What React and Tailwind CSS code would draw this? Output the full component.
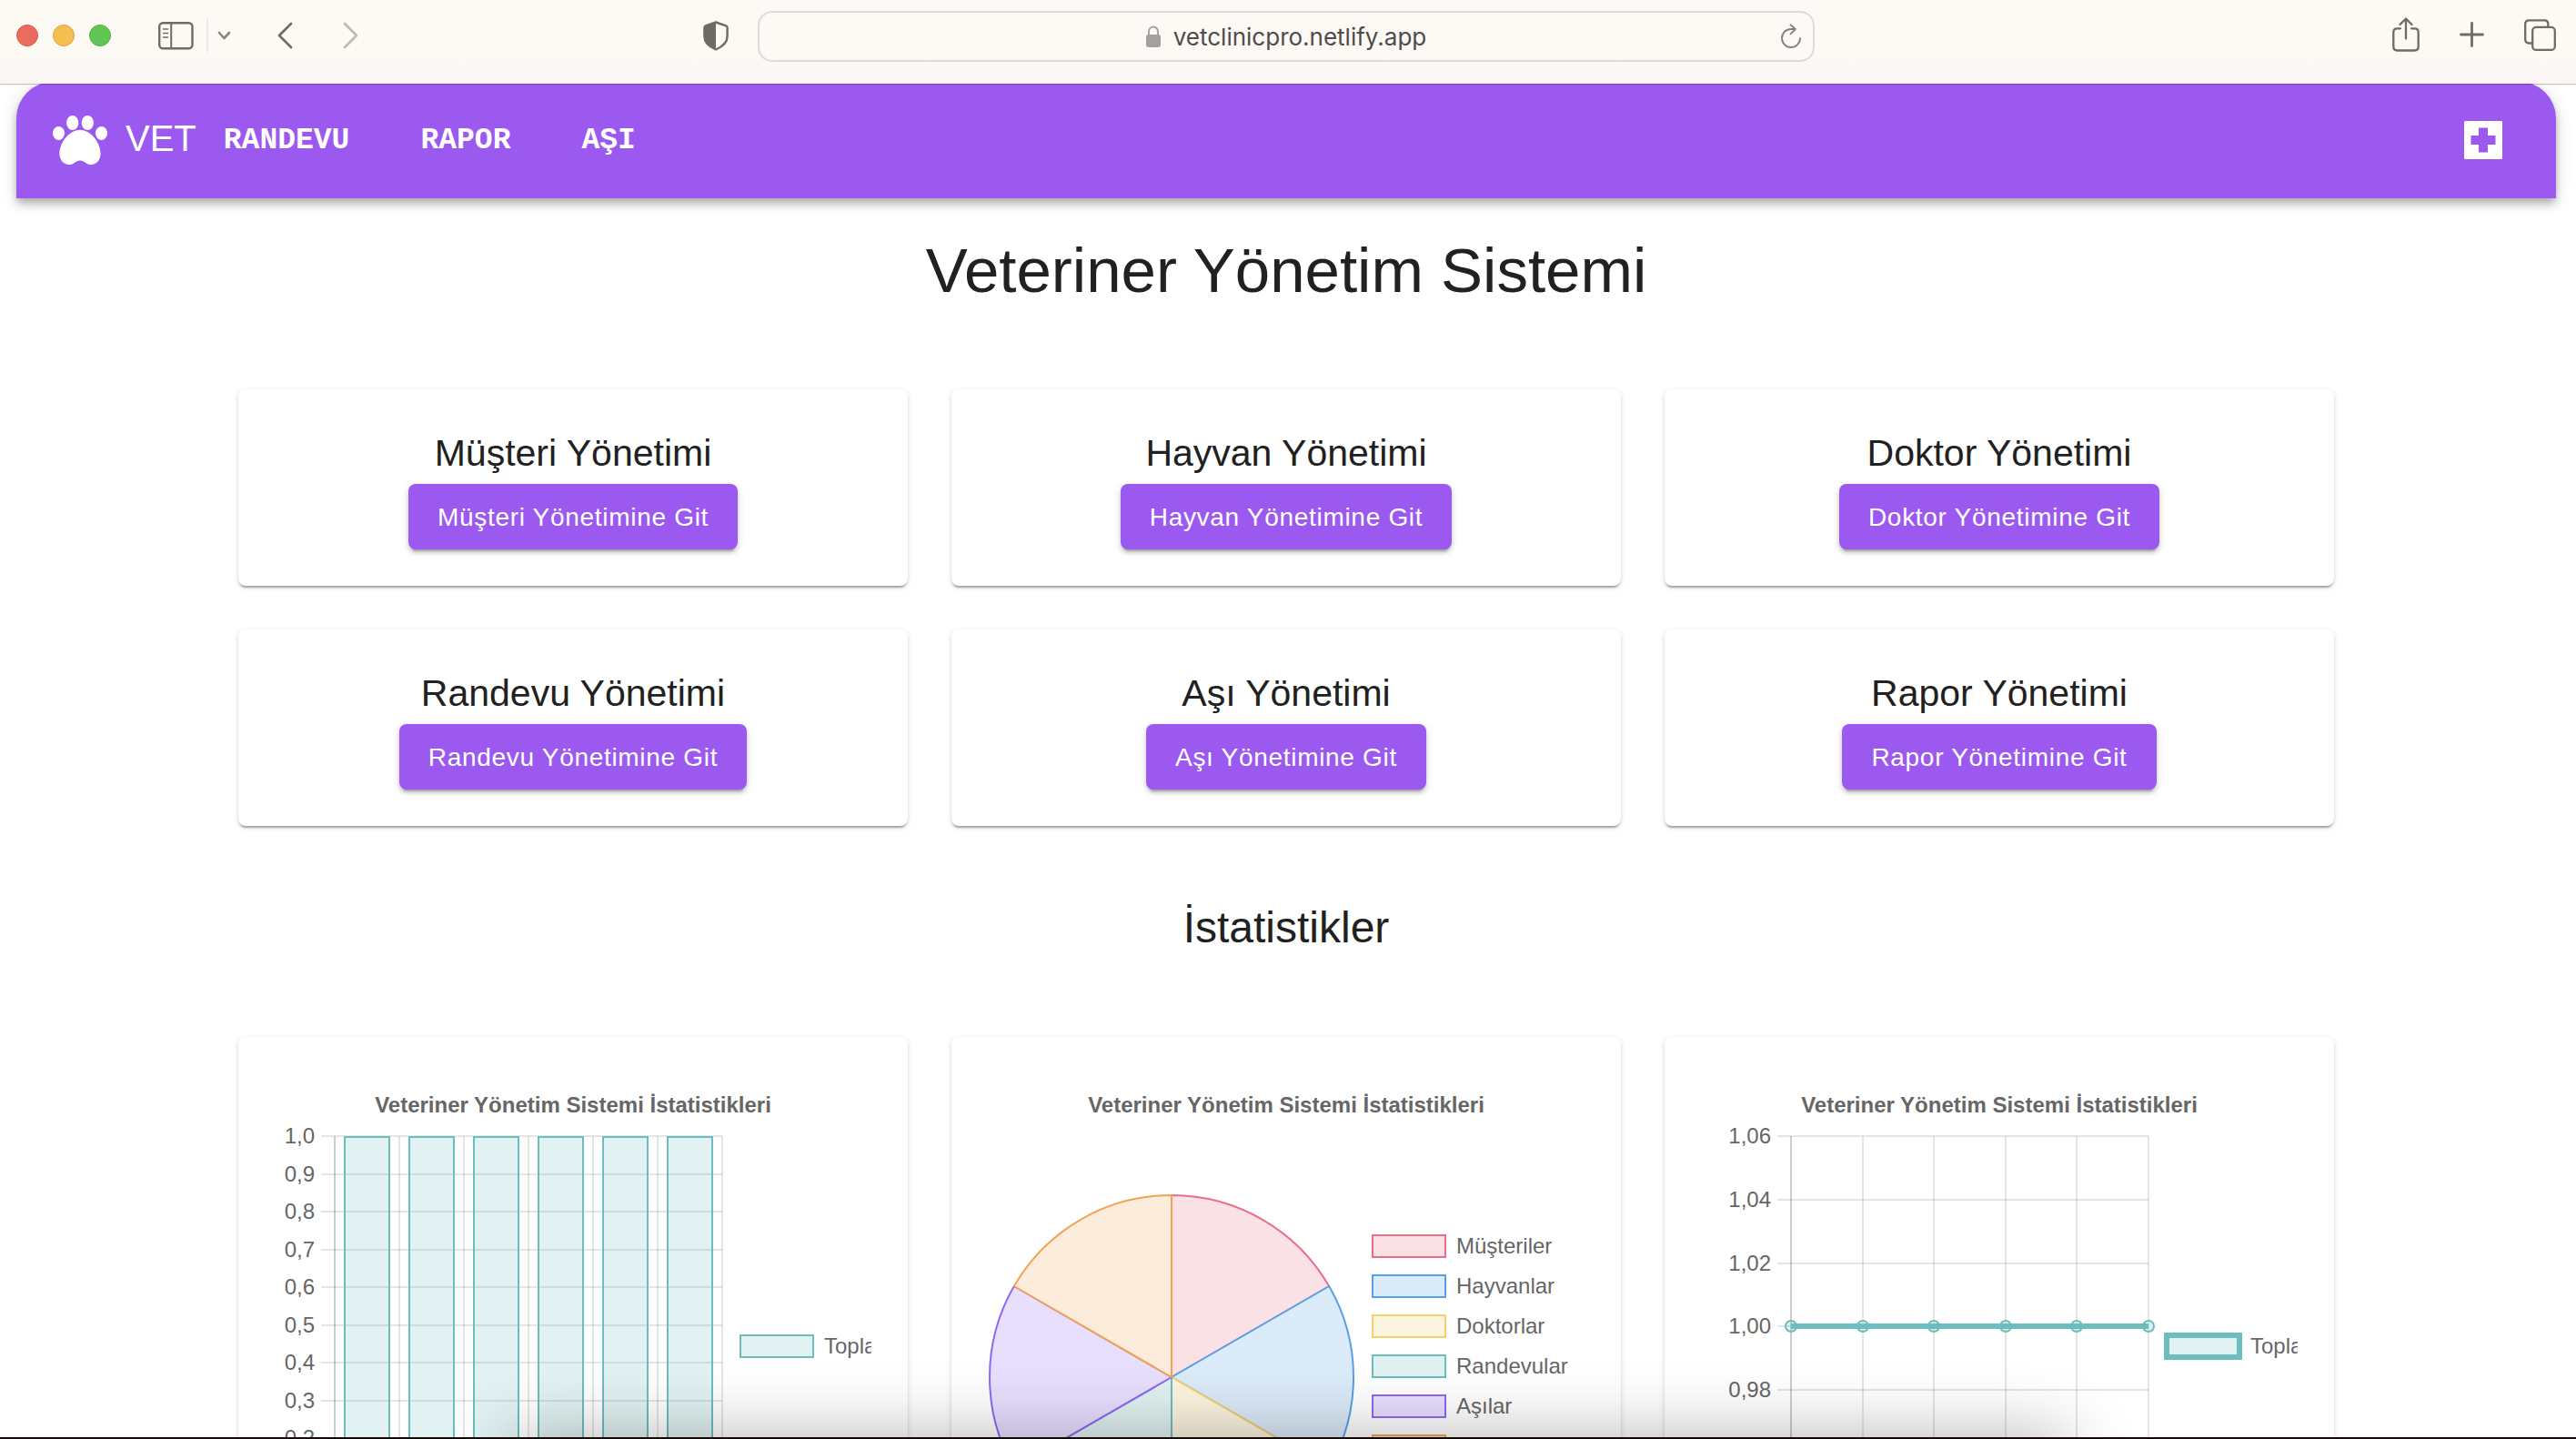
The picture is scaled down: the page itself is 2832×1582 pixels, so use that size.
const SANS = "font-['Liberation_Sans',Arial,sans-serif]";
const PAPER =
  "rounded-lg bg-white shadow-[0_4px_2px_-2px_rgba(0,0,0,0.2),0_2px_2px_rgba(0,0,0,0.14),0_2px_6px_rgba(0,0,0,0.12)]";
const INK = "#6f6b66";
const TEAL = "#6cbdbd";
const TEAL_FILL = "rgba(108,189,189,0.2)";

const modules = ["Müşteri", "Hayvan", "Doktor", "Randevu", "Aşı", "Rapor"];

const slices = [
  { label: "Müşteriler", stroke: "#eb6d87", fill: "#fae1e6" },
  { label: "Hayvanlar", stroke: "#57a0e5", fill: "#dcebf9" },
  { label: "Doktorlar", stroke: "#f7cf6b", fill: "#fdf4e0" },
  { label: "Randevular", stroke: "#6cbdbd", fill: "#e1f1f1" },
  { label: "Aşılar", stroke: "#9067f7", fill: "#e8dfff" },
  { label: "Raporlar", stroke: "#f2a354", fill: "#fcecdc" },
];

function IconButton({ label, className = "", children }) {
  return (
    <button type="button" aria-label={label} className={`shrink-0 ${className}`}>
      {children}
    </button>
  );
}

function Toolbar() {
  return (
    <header className="relative z-10 flex h-[92px] shrink-0 items-start bg-linear-to-b from-[#fdf9f4] from-60% to-[#fbf6f4] pr-[22px] pl-[18px] shadow-[0_1px_1px_rgba(0,0,0,0.22)]">
      <div className="flex h-[78px] flex-1 items-center">
        <div className="flex gap-4">
          <IconButton label="Kapat" className="size-6 rounded-full border border-[#d9574c] bg-[#ec6b5f]" />
          <IconButton label="Küçült" className="size-6 rounded-full border border-[#dba23c] bg-[#f5bf4f]" />
          <IconButton label="Büyüt" className="size-6 rounded-full border border-[#51b043] bg-[#62c655]" />
        </div>
        <IconButton label="Kenar çubuğu" className="ml-[52px]">
          <svg width="39" height="32" viewBox="0 0 39 32" fill="none" stroke={INK}>
            <rect x="1.2" y="2.2" width="36.3" height="28" rx="4" strokeWidth="2.4" />
            <path d="M14.2 2v28" strokeWidth="2" />
            <path d="M5.5 9h5M5.5 13.5h5M5.5 18h5" strokeWidth="1.5" strokeLinecap="round" />
          </svg>
        </IconButton>
        <span className="ml-3.5 h-9 w-0.5 bg-[#ebe8e5]" />
        <IconButton label="Sekme grupları" className="ml-2.5">
          <svg width="15" height="12" viewBox="0 0 15 12" fill="none" stroke="#8b8783" strokeWidth="2.6" strokeLinecap="round" strokeLinejoin="round">
            <path d="M2 3l5.4 6L13 3" />
          </svg>
        </IconButton>
        <IconButton label="Geri" className="ml-[51px]">
          <svg width="17" height="30" viewBox="0 0 17 30" fill="none" stroke={INK} strokeWidth="2.7" strokeLinecap="round" strokeLinejoin="round">
            <path d="M15 2L2 15l13 13" />
          </svg>
        </IconButton>
        <IconButton label="İleri" className="ml-[55px]">
          <svg width="17" height="30" viewBox="0 0 17 30" fill="none" stroke="#bdbab6" strokeWidth="2.7" strokeLinecap="round" strokeLinejoin="round">
            <path d="M2 2l13 13L2 28" />
          </svg>
        </IconButton>
        <IconButton label="Gizlilik raporu" className="mr-8 ml-auto">
          <svg width="28" height="33" viewBox="0 0 28 33" fill="none">
            <path d="M14 1.5L25.2 5.4Q26.6 6 26.6 7.4V17Q26.6 26 14 31.5Q1.4 26 1.4 17V7.4Q1.4 6 2.8 5.4Z" stroke={INK} strokeWidth="2.4" strokeLinejoin="round" />
            <path d="M14 1.5L2.8 5.4Q1.4 6 1.4 7.4V17Q1.4 26 14 31.5Z" fill={INK} />
          </svg>
        </IconButton>
      </div>

      <div className="mt-3 flex h-14 w-[41.6%] items-center rounded-2xl border-2 border-[#dedad7] px-3 font-[Inter,sans-serif] text-[26px] text-[#4d4c4b]">
        <span className="w-6" />
        <div className="flex flex-1 items-center justify-center gap-3.5">
          <svg width="16" height="24" viewBox="0 0 16 24" fill="none">
            <rect y="10" width="16" height="14" rx="2.4" fill="#a3a19f" />
            <path d="M3 11V6.5a5 5 0 0 1 10 0V11" stroke="#a3a19f" strokeWidth="1.9" />
          </svg>
          <span>vetclinicpro.netlify.app</span>
        </div>
        <IconButton label="Yenile">
          <svg width="24" height="28" viewBox="0 0 24 28" fill="none" stroke="#85827f" strokeWidth="1.9" strokeLinecap="round" strokeLinejoin="round">
            <path d="M22 16a10 10 0 1 1-10-10h4.5" />
            <path d="M11.5 1.2L16.8 6l-5.3 5.3" />
          </svg>
        </IconButton>
      </div>

      <div className="flex h-[76px] flex-1 items-center justify-end gap-11">
        <IconButton label="Paylaş">
          <svg width="30" height="38" viewBox="0 0 30 38" fill="none" stroke={INK} strokeWidth="2.3" strokeLinecap="round" strokeLinejoin="round">
            <path d="M9 12.3H5.5Q1.3 12.3 1.3 16.5V32.3Q1.3 36.5 5.5 36.5H24.5Q28.7 36.5 28.7 32.3V16.5Q28.7 12.3 24.5 12.3H21" />
            <path d="M15 23.5V2M8.5 8L15 1.5L21.5 8" />
          </svg>
        </IconButton>
        <IconButton label="Yeni sekme">
          <svg width="27" height="28" viewBox="0 0 27 28" fill="none" stroke={INK} strokeWidth="2.8" strokeLinecap="round">
            <path d="M13.5 1.5v25M1.5 14h24" />
          </svg>
        </IconButton>
        <IconButton label="Sekmeler">
          <svg width="35" height="35" viewBox="0 0 35 35" fill="none" stroke={INK} strokeWidth="2.3">
            <path d="M9 26.5H5.5Q1.2 26.5 1.2 22.3V5.5Q1.2 1.3 5.5 1.3H22.3Q26.3 1.3 26.3 5.5V9" />
            <rect x="9.2" y="8.9" width="24.6" height="25" rx="4" />
          </svg>
        </IconButton>
      </div>
    </header>
  );
}

function NavBar() {
  return (
    <nav className="-mt-0.5 mr-[22px] ml-[18px] flex h-32 shrink-0 items-center rounded-t-[40px] bg-[#9c59ef] pr-[59px] pl-10 text-white shadow-[0_4px_8px_-2px_rgba(0,0,0,0.2),0_8px_10px_rgba(0,0,0,0.14),0_2px_20px_rgba(0,0,0,0.12)]">
      <svg width="60" height="54" viewBox="0 0 60 54" fill="white">
        <ellipse cx="6.5" cy="19.5" rx="6.5" ry="7.5" />
        <ellipse cx="21.7" cy="8" rx="6.6" ry="8" />
        <ellipse cx="38.3" cy="8" rx="6.6" ry="8" />
        <ellipse cx="53.5" cy="19.5" rx="6.5" ry="7.5" />
        <path d="M30 15.7C42 15.7 52.6 30 52.6 42C52.6 49 48 54 42 54C37 54 35 49.4 30 49.4C25 49.4 23 54 18 54C12 54 7.4 49 7.4 42C7.4 30 18 15.7 30 15.7Z" />
      </svg>
      <span className="mb-1 ml-5 text-[40px] leading-none">VET</span>
      <div className="mt-0.5 ml-[30px] flex gap-[78px] font-['Courier_New','Liberation_Mono',monospace] text-[33px] leading-10 font-bold">
        <a href="#randevu">RANDEVU</a>
        <a href="#rapor">RAPOR</a>
        <a href="#asi">AŞI</a>
      </div>
      <IconButton label="Klinik" className="ml-auto">
        <svg width="42" height="42" viewBox="0 0 42 42">
          <rect width="42" height="42" rx="1" fill="white" />
          <path d="M16 7.5h10V16h8.5v10H26v8.5H16V26H7.5V16H16Z" fill="#9c59ef" />
        </svg>
      </IconButton>
    </nav>
  );
}

function ModuleCard({ name }) {
  return (
    <section className={`${PAPER} flex flex-col items-center p-10`}>
      <h2 className="mb-1 text-[41px] leading-15">{name} Yönetimi</h2>
      <button
        type="button"
        className="h-[72px] rounded-lg bg-[#9c59ef] px-8 pt-0.5 text-[28px] tracking-wide text-white shadow-[0_6px_2px_-4px_rgba(0,0,0,0.2),0_4px_4px_rgba(0,0,0,0.14),0_2px_10px_rgba(0,0,0,0.12)]"
      >
        {name} Yönetimine Git
      </button>
    </section>
  );
}

function ChartCard({ children }) {
  return (
    <section className={`${PAPER} p-10`}>
      <svg viewBox="0 0 656 656" className="block h-auto w-full overflow-hidden" fontSize="24" fill="#666">
        <text x="328" y="43" textAnchor="middle" fontWeight="bold">
          Veteriner Yönetim Sistemi İstatistikleri
        </text>
        {children}
      </svg>
    </section>
  );
}

function Grid({ left, columns, rows, labels }) {
  const right = 492;
  return (
    <g>
      <g stroke="rgba(0,0,0,0.1)" strokeWidth="2">
        {labels.map((l, i) => (
          <path key={l} d={`M${left - 15} ${Math.round(69 + i * rows)}H${right}`} />
        ))}
        {Array.from({ length: columns + 1 }, (_, i) => (
          <path key={i} d={`M${Math.round(left + ((right - left) / columns) * i)} 69V600`} />
        ))}
        <path d={`M${left} 69V600`} />
      </g>
      {labels.map((l, i) => (
        <text key={l} x={left - 22} y={Math.round(77 + i * rows)} textAnchor="end">
          {l}
        </text>
      ))}
    </g>
  );
}

function BarChart() {
  const labels = ["1,0", "0,9", "0,8", "0,7", "0,6", "0,5", "0,4", "0,3", "0,2"];
  return (
    <ChartCard>
      <Grid left={66} columns={6} rows={41.5} labels={labels} />
      {[0, 1, 2, 3, 4, 5].map((i) => (
        <path key={i} d={`M${77 + i * 71} 484V70h49V484`} fill={TEAL_FILL} stroke={TEAL} strokeWidth="2" />
      ))}
      <rect x="512" y="288" width="80" height="24" fill={TEAL_FILL} stroke={TEAL} strokeWidth="2" />
      <text x="604" y="308">Toplam</text>
    </ChartCard>
  );
}

function PieChart() {
  const cx = 202;
  const cy = 334;
  const r = 200;
  const point = (i) => {
    const a = (i * Math.PI) / 3 - Math.PI / 2;
    return `${cx + r * Math.cos(a)} ${cy + r * Math.sin(a)}`;
  };
  return (
    <ChartCard>
      {slices.map((s, i) => (
        <path
          key={s.label}
          d={`M${cx} ${cy}L${point(i)}A${r} ${r} 0 0 1 ${point(i + 1)}Z`}
          fill={s.fill}
          stroke={s.stroke}
          strokeWidth="2"
          strokeLinejoin="bevel"
        />
      ))}
      {slices.map((s, i) => (
        <g key={s.label}>
          <rect x="423" y={178 + i * 44} width="80" height="24" fill={s.fill} stroke={s.stroke} strokeWidth="2" />
          <text x="515" y={198 + i * 44}>{s.label}</text>
        </g>
      ))}
    </ChartCard>
  );
}

function LineChart() {
  const labels = ["1,06", "1,04", "1,02", "1,00", "0,98"];
  const xs = [99, 178, 256, 335, 413, 492];
  return (
    <ChartCard>
      <Grid left={99} columns={5} rows={69.8} labels={labels} />
      <path d="M99 278H492" stroke={TEAL} strokeWidth="6" />
      {xs.map((x) => (
        <circle key={x} cx={x} cy="278" r="6" fill={TEAL_FILL} stroke={TEAL} strokeWidth="2" />
      ))}
      <rect x="512" y="288" width="80" height="24" fill="#e1f1f1" stroke={TEAL} strokeWidth="6" />
      <text x="604" y="308">Toplam</text>
    </ChartCard>
  );
}

export default function App() {
  return (
    <div className={`${SANS} relative flex h-screen flex-col overflow-hidden bg-white text-[#212121]`}>
      <Toolbar />
      <div className="flex min-h-0 flex-1 flex-col overflow-hidden">
        <NavBar />
        <main className="mr-1 shrink-0 pt-10">
          <div className="mx-auto max-w-[2304px]">
            <h1 className="mb-[90px] text-center text-[69px] leading-20">Veteriner Yönetim Sistemi</h1>
            <div className="grid grid-cols-3 gap-12">
              {modules.map((name) => (
                <ModuleCard key={name} name={name} />
              ))}
            </div>
            <h2 className="mt-20 mb-[88px] text-center text-5xl leading-16">İstatistikler</h2>
            <div className="grid grid-cols-3 gap-12">
              <BarChart />
              <PieChart />
              <LineChart />
            </div>
          </div>
        </main>
      </div>
      <div className="pointer-events-none absolute inset-x-[560px] top-full h-20 shadow-[0_0_80px_rgba(0,0,0,0.32)]" />
      <div className="relative h-0.5 shrink-0 bg-[#120a08]" />
    </div>
  );
}
